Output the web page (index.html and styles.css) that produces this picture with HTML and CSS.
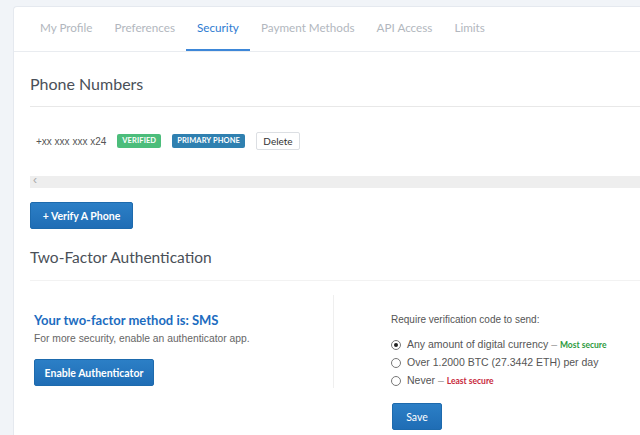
FILE: index.html
```html
<!DOCTYPE html>
<html>
<head>
<meta charset="utf-8">
<link rel="stylesheet" href="styles.css">
</head>
<body>
<div class="card">
  <nav class="tabs">
    <span class="tab">My Profile</span>
    <span class="tab">Preferences</span>
    <span class="tab active">Security</span>
    <span class="tab">Payment Methods</span>
    <span class="tab">API Access</span>
    <span class="tab">Limits</span>
  </nav>
  <div class="content">
    <h2 class="section-title">Phone Numbers</h2>
    <div class="phone-row">
      <span class="phone">+xx xxx xxx x24</span>
      <span class="badge verified">VERIFIED</span>
      <span class="badge primary">PRIMARY PHONE</span>
      <span class="btn-delete">Delete</span>
    </div>
    <div class="scrollbar"><span class="arrow">&lsaquo;</span></div>
    <button class="btn btn-verify">+ Verify A Phone</button>
    <h2 class="section-title tfa">Two-Factor Authentication</h2>
    <div class="tfa-grid">
      <div class="tfa-left">
        <div class="method">Your two-factor method is: SMS</div>
        <div class="hint">For more security, enable an authenticator app.</div>
        <button class="btn btn-enable">Enable Authenticator</button>
      </div>
      <div class="tfa-right">
        <div class="req">Require verification code to send:</div>
        <label class="opt"><span class="radio checked"></span>Any amount of digital currency <span class="dash">&ndash;</span> <b class="most">Most secure</b></label>
        <label class="opt"><span class="radio"></span>Over 1.2000 BTC (27.3442 ETH) per day</label>
        <label class="opt"><span class="radio"></span>Never <span class="dash">&ndash;</span> <b class="least">Least secure</b></label>
      </div>
    </div>
    <div class="save-row"><button class="btn btn-save">Save</button></div>
  </div>
</div>
</body>
</html>
```
FILE: styles.css
```css
html, body {
  margin: 0;
  padding: 0;
  overflow: hidden;
}
body {
  background: #f1f4f8;
  padding: 6px 0 0 13px;
  width: 640px;
  height: 435px;
  box-sizing: border-box;
  font-family: Lato, "Liberation Sans", sans-serif;
}
.card {
  background: #fff;
  border: 1px solid #e5e9ef;
  border-right: none;
  border-bottom: none;
  border-radius: 4px 0 0 0;
  width: 627px;
  height: 429px;
  overflow: hidden;
}
.tabs {
  display: flex;
  height: 44px;
  align-items: center;
  padding-left: 15px;
  border-bottom: 1px solid #e9ecf0;
}
.tab {
  padding: 0 11px;
  font-size: 11.7px;
  color: #b2b7be;
  height: 44px;
  line-height: 41px;
  box-sizing: border-box;
  white-space: nowrap;
}
.tab.active {
  color: #2e7bd1;
  border-bottom: 2px solid #3d87d8;
}
.content {
  padding: 0 0 0 16px;
}
.section-title {
  margin: 0;
  font-weight: 400;
  font-size: 16px;
  color: #4a5058;
  padding: 22px 0 12px;
  line-height: 20px;
  border-bottom: 1px solid #e8e8e8;
}
.phone-row {
  display: flex;
  align-items: center;
  height: 20px;
  margin-top: 24px;
  padding-left: 6px;
}
.phone {
  font-family: "Liberation Sans", Arial, sans-serif;
  font-size: 10px;
  color: #555;
  margin-right: 11px;
}
.badge {
  font-size: 7.5px;
  font-weight: 700;
  color: #fff;
  height: 14px;
  line-height: 14px;
  padding: 0 5px;
  border-radius: 2px;
  margin-right: 11px;
  letter-spacing: 0.1px;
}
.verified { background: #4cbd7b; }
.primary { background: #2f80b0; }
.btn-delete {
  border: 1px solid #dcdfe3;
  border-radius: 2px;
  height: 18px;
  line-height: 16px;
  font-size: 10px;
  color: #333;
  background: #fff;
  box-sizing: border-box;
  width: 44px;
  text-align: center;
}
.scrollbar {
  margin-top: 25px;
  height: 12px;
  background: #eeeeee;
  position: relative;
}
.arrow {
  position: absolute;
  left: 3px;
  top: -3px;
  font-size: 12px;
  color: #aaa;
  font-family: "Liberation Sans", sans-serif;
}
.btn {
  display: block;
  border: 1px solid #1d6aad;
  border-radius: 2px;
  background: linear-gradient(#2c7fc6, #1f6db5);
  color: #fff;
  font-family: Lato, "Liberation Sans", sans-serif;
  font-weight: 700;
  font-size: 10.5px;
  padding: 0;
  cursor: pointer;
}
.btn-verify {
  margin-top: 14px;
  width: 103px;
  height: 27px;
}
.section-title.tfa {
  font-size: 15.5px;
  padding-top: 18px;
  padding-bottom: 13px;
  border-bottom-color: #f2f2f2;
}
.tfa-grid {
  display: grid;
  grid-template-columns: 304px 1fr;
  margin-top: 14px;
}
.tfa-left {
  padding: 17px 0 0 4px;
  border-right: 1px solid #efefef;
  height: 76px;
}
.method {
  font-size: 13px;
  font-weight: 700;
  color: #1c6cc0;
  line-height: 16px;
}
.hint {
  font-family: "Liberation Sans", Arial, sans-serif;
  font-size: 10.3px;
  color: #666;
  margin-top: 5px;
}
.btn-enable {
  margin-top: 15px;
  width: 120px;
  height: 27px;
}
.tfa-right {
  padding: 18px 0 0 57px;
  font-family: "Liberation Sans", Arial, sans-serif;
  font-size: 10px;
  color: #555;
}
.req {
  line-height: 13px;
  margin-bottom: 9px;
}
.opt {
  display: block;
  height: 18px;
  line-height: 18px;
  font-size: 10.5px;
  color: #555;
  white-space: nowrap;
}
.radio {
  display: inline-block;
  vertical-align: -2px;
  width: 8px;
  height: 8px;
  border: 1px solid #777;
  border-radius: 50%;
  margin-right: 6px;
  box-sizing: content-box;
  position: relative;
}
.radio.checked::after {
  content: "";
  position: absolute;
  left: 2px;
  top: 2px;
  width: 4px;
  height: 4px;
  border-radius: 50%;
  background: #222;
}
.dash { color: #999; }
.most { color: #2e9a3e; font-size: 8.5px; font-family: Lato, sans-serif; }
.least { color: #c8283a; font-size: 8.5px; font-family: Lato, sans-serif; }
.save-row {
  padding-left: 362px;
  margin-top: 14px;
}
.btn-save {
  width: 50px;
  height: 27px;
  font-weight: 400;
  font-size: 10.5px;
}
```
